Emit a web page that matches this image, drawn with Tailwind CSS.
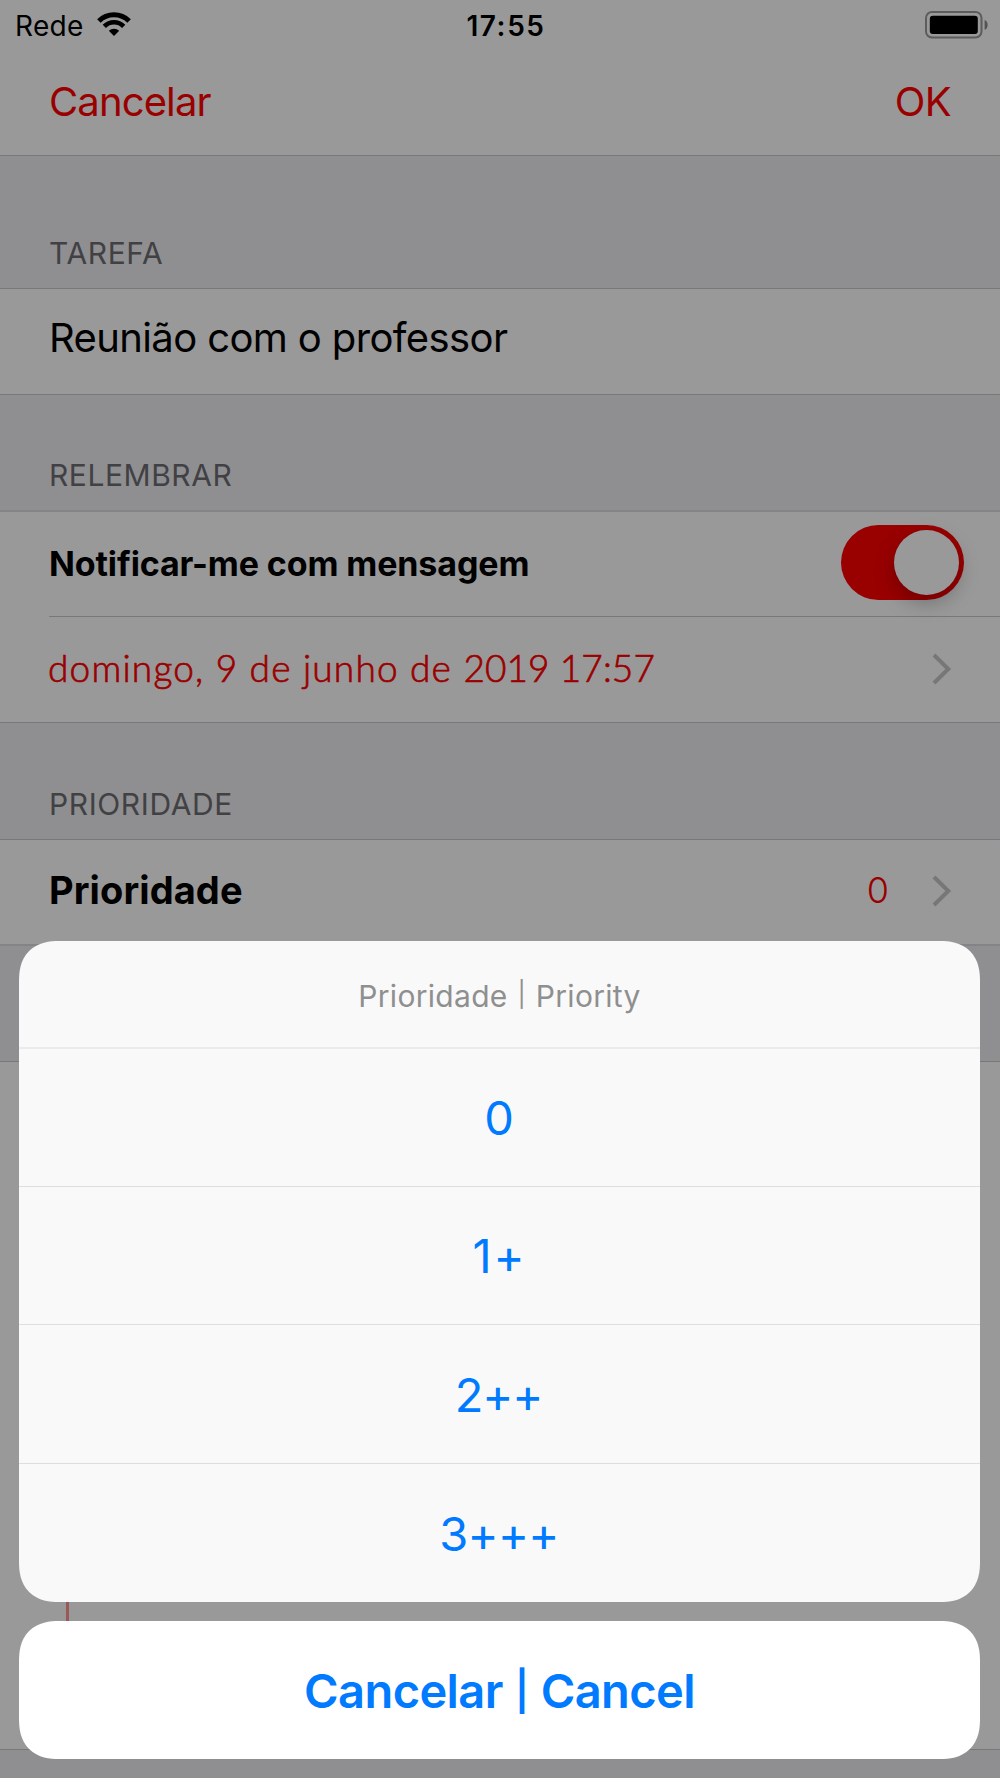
<!DOCTYPE html>
<html lang="pt">
<head>
<meta charset="utf-8">
<title>Tarefa</title>
<script src="https://cdn.jsdelivr.net/npm/@tailwindcss/browser@4"></script>
</head>
<body class="relative h-[1778px] w-[1000px] overflow-hidden bg-[#efeff4] font-['Inter',sans-serif] text-black">
  <div class="flex h-full flex-col">
    <!-- Status bar and navigation -->
    <header class="flex h-[156px] shrink-0 flex-col border-b border-[#c8c7cc] bg-white">
      <div class="grid h-[49px] grid-cols-3 items-center pt-[2px] text-[28px] leading-none">
        <div class="flex items-center pl-[15px]">
          <span class="tracking-[0.3px]">Rede</span>
          <svg class="-mt-[3px] ml-[12px]" width="36" height="26" viewBox="0 0 36 26" fill="none" stroke="#000">
            <path d="M2.9 9.9a21.4 21.4 0 0 1 30.2 0" stroke-width="5"/>
            <path d="M8.3 15.3a13.7 13.7 0 0 1 19.4 0" stroke-width="4.6"/>
            <path d="M18 25l-5.2-5.2a7.4 7.4 0 0 1 10.4 0z" fill="#000" stroke="none"/>
          </svg>
        </div>
        <span class="pl-[12px] text-center font-semibold tracking-[1.6px]">17:55</span>
        <div class="flex justify-end pr-[12px]">
          <svg width="63" height="28" viewBox="0 0 63 28" class="-mt-[2px]">
            <rect x="1" y="1" width="55.5" height="25.5" rx="6" fill="none" stroke="#9a9a9a" stroke-width="2"/>
            <rect x="4.8" y="4.8" width="48" height="18.2" rx="3" fill="#000"/>
            <path d="M59.6 9c4 1.2 4 8.6 0 9.8z" fill="#8a8a8a"/>
          </svg>
        </div>
      </div>
      <nav class="flex h-[105px] items-center justify-between pr-[49px] pl-[49px] text-[40px] leading-none text-[#ff0000]">
        <span class="tracking-[-0.88px]">Cancelar</span>
        <span class="tracking-[-0.6px]">OK</span>
      </nav>
    </header>

    <h2 class="flex h-[132px] shrink-0 items-end pb-[20px] pl-[49px] text-[30px] leading-[30px] tracking-[0.63px] text-[#6d6d72]">TAREFA</h2>
    <div class="flex h-[107px] shrink-0 items-center border-y border-[#c8c7cc] bg-white pb-[7px] pl-[49px] text-[40px] leading-none tracking-[-0.62px]">Reunião com o professor</div>

    <h2 class="flex h-[115px] shrink-0 items-end pb-[20px] pl-[49px] text-[30px] leading-[30px] tracking-[0.55px] text-[#6d6d72]">RELEMBRAR</h2>
    <div class="h-[213px] shrink-0 border-t-2 border-b border-t-[#dcdce0] border-b-[#c8c7cc] bg-white">
      <div class="ml-[49px] flex h-[105px] items-center justify-between border-b border-[#c8c7cc] pr-[36px]">
        <span class="text-[34px] leading-none font-bold tracking-[-0.12px]">Notificar-me com mensagem</span>
        <span class="mb-[3px] flex h-[75px] w-[123px] items-center justify-end rounded-full bg-[#ff0000] pr-[5px]">
          <span class="size-[65px] rounded-full bg-white shadow-[0_8px_20px_rgba(0,0,0,0.25)]"></span>
        </span>
      </div>
      <div class="flex h-[105px] items-center justify-between pr-[48px] pl-[48px] text-[#ff0000]">
        <span class="-mt-[4px] font-['Lato',sans-serif] text-[37px] leading-none font-light tracking-[1.2px] [-webkit-text-stroke:0.7px_#ff0000]">domingo, 9 de junho de <span class="tracking-[0.1px]">2019 17:57</span></span>
        <svg class="-mt-[2px]" width="20" height="32" viewBox="0 0 20 32" fill="none" stroke="#c7c7cc" stroke-width="4"><path d="M2 2l14.3 14L2 30"/></svg>
      </div>
    </div>

    <h2 class="flex h-[116px] shrink-0 items-end pb-[20px] pl-[49px] text-[30px] leading-[30px] tracking-[0.6px] text-[#6d6d72]">PRIORIDADE</h2>
    <div class="flex h-[107px] shrink-0 items-center border-t border-b-2 border-t-[#c8c7cc] border-b-[#dcdce0] bg-white pr-[48px] pb-[3px] pl-[49px]">
      <span class="-mt-[2px] grow text-[38px] leading-none font-bold tracking-[0.1px]">Prioridade</span>
      <span class="-mt-[2px] mr-[43px] text-[36px] leading-none font-light text-[#ff0000]">0</span>
      <svg width="20" height="32" viewBox="0 0 20 32" fill="none" stroke="#c7c7cc" stroke-width="4"><path d="M2 2l14.3 14L2 30"/></svg>
    </div>

    <!-- Notes area with its margin rule -->
    <div class="mt-[115px] h-[689px] shrink-0 border-y border-[#c8c7cc] bg-white pl-[66px]">
      <div class="h-full border-l-3 border-[#ff9490]"></div>
    </div>
  </div>

  <!-- Action sheet over the dimmed page -->
  <div class="absolute inset-0 flex flex-col gap-[19px] bg-black/40 pt-[941px] pr-[20px] pl-[19px] text-center text-[47px] leading-none text-[#007aff]">
    <div class="flex h-[661px] shrink-0 flex-col overflow-hidden rounded-[40px] bg-[#f9f9f9] [corner-shape:superellipse(1.25)]">
      <div class="flex h-[108px] items-center justify-center border-b-2 border-[#ebebed] pt-[3px] text-[30px] tracking-[0.31px] whitespace-pre text-[#8f8f8f]">Prioridade <span class="-mt-[2px] px-px text-[25px]">|</span> Priority</div>
      <div class="flex h-[138px] items-center justify-center border-b border-[#dedee0] pr-px">0</div>
      <div class="flex h-[138px] items-center justify-center border-b border-[#dedee0] tracking-[2px]">1+</div>
      <div class="flex h-[139px] items-center justify-center border-b border-[#dedee0] pr-[2px] tracking-[-1.1px]">2++</div>
      <div class="flex grow items-center justify-center pr-px tracking-[-0.7px]">3+++</div>
    </div>
    <div class="flex h-[138px] shrink-0 items-center justify-center rounded-[40px] bg-white font-semibold tracking-[-0.6px] whitespace-pre [corner-shape:superellipse(1.25)]">Cancelar <span class="px-px text-[39px]">|</span> Cancel</div>
  </div>
</body>
</html>
